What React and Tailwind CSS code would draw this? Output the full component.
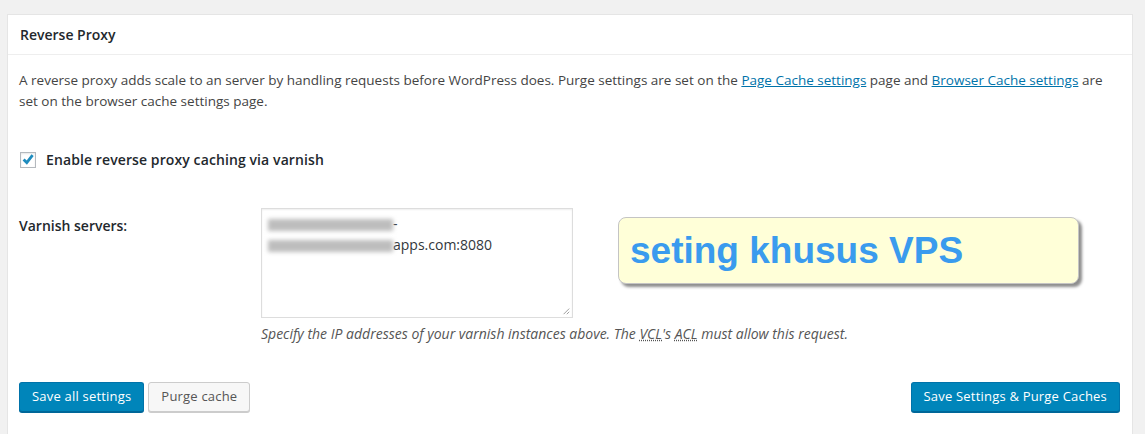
import { useState } from 'react';

const Blur = ({ w }) => (
    <span className={`inline-block align-middle h-[12px] bg-[#bdbdbd] blur-[2px] ${w}`} />
)

const App = () => {
    const [enabled, setEnabled] = useState(true)

    return (
        <div className="min-h-[434px] bg-[#f1f1f1] pt-[14px] pl-[7px] pr-[12px] font-['Open_Sans',sans-serif] text-[13px] text-[#444]">
            <div className="border border-[#e5e5e5] bg-white min-h-[440px]">
                <div className="h-[40px] flex items-center px-[12px] border-b border-[#eee]">
                    <h3 className="text-[14px] font-semibold text-[#23282d]">Reverse Proxy</h3>
                </div>

                <div className="px-[12px]">
                    <p className="mt-[15px] -ml-px text-[13.5px] leading-[21px]">
                        A reverse proxy adds scale to an server by handling requests before WordPress does. Purge settings are set on the{' '}
                        <a href="#" className="text-[#0073aa] underline">Page Cache settings</a> page and{' '}
                        <a href="#" className="text-[#0073aa] underline">Browser Cache settings</a> are set on the browser cache settings page.
                    </p>

                    <label className="mt-[37px] flex items-center gap-[10px] cursor-pointer">
                        <span
                            onClick={() => setEnabled(!enabled)}
                            className="w-[16px] h-[16px] shrink-0 border border-[#b4b9be] bg-white shadow-[inset_0_1px_2px_rgba(0,0,0,0.1)] flex items-center justify-center"
                        >
                            {enabled && (
                                <svg viewBox="0 0 16 16" className="w-[16px] h-[16px] shrink-0">
                                    <path d="M3.6 7.4 6.8 10.6 12.6 3.2" fill="none" stroke="#1e8cbe" strokeWidth="2.8" strokeLinejoin="miter" />
                                </svg>
                            )}
                        </span>
                        <span className="text-[14px] font-semibold text-[#23282d] tracking-[0.1px]">Enable reverse proxy caching via varnish</span>
                    </label>

                    <div className="mt-[38px] flex">
                        <div className="w-[242px] shrink-0 pt-[7px] -ml-px text-[14px] font-semibold text-[#23282d]">Varnish servers:</div>
                        <div className="w-[312px] shrink-0">
                            <div className="relative h-[110px] border border-[#ddd] shadow-[inset_0_1px_2px_rgba(0,0,0,0.07)] px-[6px] py-[4px] text-[14px] leading-[21px] text-[#32373c]">
                                <div><Blur w="w-[125px]" />-</div>
                                <div><Blur w="w-[125px]" />apps.com:8080</div>
                                <svg viewBox="0 0 10 10" className="absolute right-[2px] bottom-[2px] w-[8px] h-[8px]">
                                    <path d="M9 2 2 9M9 6 6 9" stroke="#888" strokeWidth="1" />
                                </svg>
                            </div>
                            <p className="mt-[6px] whitespace-nowrap italic text-[14px] leading-[20px] text-[#555]">
                                Specify the IP addresses of your varnish instances above. The{' '}
                                <abbr title="Varnish Configuration Language" className="underline decoration-dotted">VCL</abbr>'s{' '}
                                <abbr title="Access Control List" className="underline decoration-dotted">ACL</abbr> must allow this request.
                            </p>
                        </div>
                        <div className="ml-[45px] mt-[9px] w-[461px] h-[67px] rounded-[8px] border border-[#c4c4c4] bg-[#ffffd8] shadow-[3px_3px_3px_rgba(0,0,0,0.45)] flex items-center px-[11px]">
                            <span className="font-['Liberation_Sans',Arial,sans-serif] font-bold text-[37px] text-[#3a9bee] leading-none">seting khusus VPS</span>
                        </div>
                    </div>

                    <div className="mt-[38px] -ml-px flex items-center gap-[4px]">
                        <button className="h-[30px] px-[12px] rounded-[3px] bg-[#0085ba] border border-[#0073aa] border-b-[#006799] text-white text-[13px] tracking-[0.2px] shadow-[0_1px_0_#006799]">Save all settings</button>
                        <button className="h-[30px] px-[12px] rounded-[3px] bg-[#f7f7f7] border border-[#ccc] text-[#555] text-[13px] tracking-[0.2px] shadow-[0_1px_0_#ccc]">Purge cache</button>
                        <button className="ml-auto h-[30px] px-[12px] rounded-[3px] bg-[#0085ba] border border-[#0073aa] border-b-[#006799] text-white text-[13px] tracking-[0.2px] shadow-[0_1px_0_#006799]">Save Settings &amp; Purge Caches</button>
                    </div>
                </div>
            </div>
        </div>
    )
}

export default App
